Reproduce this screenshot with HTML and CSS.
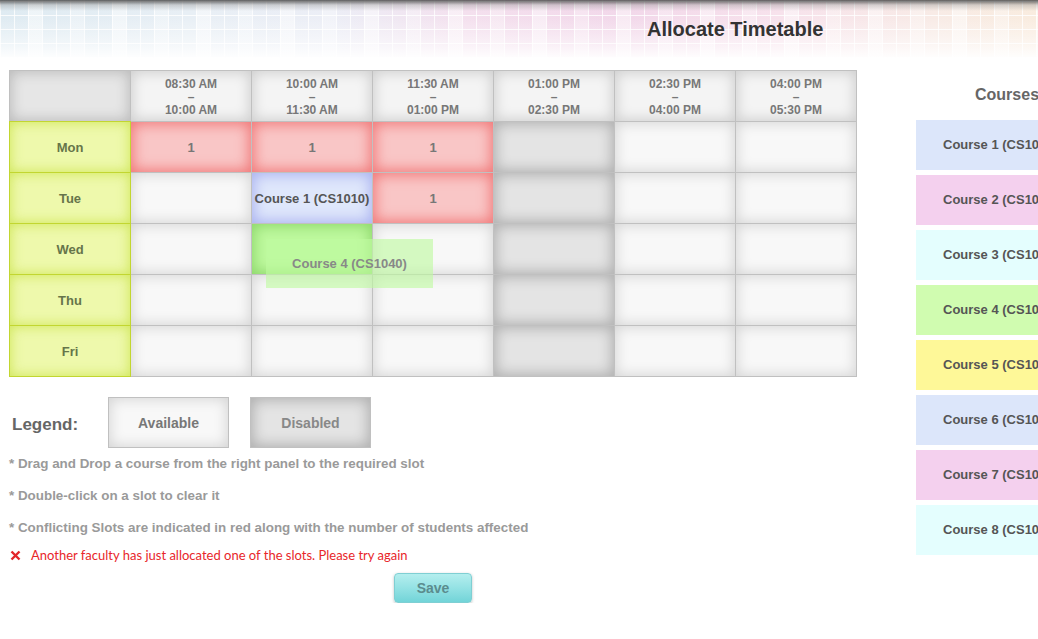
FILE: index.html
```html
<!DOCTYPE html>
<html>
<head>
<meta charset="utf-8">
<title>Allocate Timetable</title>
<link rel="stylesheet" href="styles.css">
</head>
<body>
<header class="banner">
  <h1 class="title">Allocate Timetable</h1>
</header>
<main class="page">
  <section class="left">
    <div class="grid-wrap">
      <div class="grid">
        <div class="cell corner"></div>
        <div class="cell head">08:30 AM<span>–</span>10:00 AM</div>
        <div class="cell head">10:00 AM<span>–</span>11:30 AM</div>
        <div class="cell head">11:30 AM<span>–</span>01:00 PM</div>
        <div class="cell head">01:00 PM<span>–</span>02:30 PM</div>
        <div class="cell head">02:30 PM<span>–</span>04:00 PM</div>
        <div class="cell head">04:00 PM<span>–</span>05:30 PM</div>

        <div class="cell day">Mon</div>
        <div class="cell conflict">1</div>
        <div class="cell conflict">1</div>
        <div class="cell conflict">1</div>
        <div class="cell disabled"></div>
        <div class="cell avail"></div>
        <div class="cell avail"></div>

        <div class="cell day">Tue</div>
        <div class="cell avail"></div>
        <div class="cell c-blue">Course 1 (CS1010)</div>
        <div class="cell conflict">1</div>
        <div class="cell disabled"></div>
        <div class="cell avail"></div>
        <div class="cell avail"></div>

        <div class="cell day">Wed</div>
        <div class="cell avail"></div>
        <div class="cell c-green"></div>
        <div class="cell avail"></div>
        <div class="cell disabled"></div>
        <div class="cell avail"></div>
        <div class="cell avail"></div>

        <div class="cell day">Thu</div>
        <div class="cell avail"></div>
        <div class="cell avail"></div>
        <div class="cell avail"></div>
        <div class="cell disabled"></div>
        <div class="cell avail"></div>
        <div class="cell avail"></div>

        <div class="cell day">Fri</div>
        <div class="cell avail"></div>
        <div class="cell avail"></div>
        <div class="cell avail"></div>
        <div class="cell disabled"></div>
        <div class="cell avail"></div>
        <div class="cell avail"></div>
      </div>
      <div class="ghost">Course 4 (CS1040)</div>
    </div>

    <div class="legend">
      <span class="legend-label">Legend:</span>
      <div class="legend-box avail">Available</div>
      <div class="legend-box disabled">Disabled</div>
    </div>

    <ul class="notes">
      <li>* Drag and Drop a course from the right panel to the required slot</li>
      <li>* Double-click on a slot to clear it</li>
      <li>* Conflicting Slots are indicated in red along with the number of students affected</li>
    </ul>

    <p class="error"><svg class="error-x" width="11" height="11" viewBox="0 0 11 11"><path d="M1.5 1.5 L9.5 9.5 M9.5 1.5 L1.5 9.5" stroke="#e2262a" stroke-width="2.4" stroke-linecap="butt"/></svg>Another faculty has just allocated one of the slots. Please try again</p>

    <div class="actions">
      <button class="save">Save</button>
    </div>
  </section>

  <aside class="courses">
    <h2 class="courses-title">Courses</h2>
    <div class="course blue">Course 1 (CS1010)</div>
    <div class="course pink">Course 2 (CS1020)</div>
    <div class="course cyan">Course 3 (CS1030)</div>
    <div class="course green">Course 4 (CS1040)</div>
    <div class="course yellow">Course 5 (CS1050)</div>
    <div class="course blue">Course 6 (CS1060)</div>
    <div class="course pink">Course 7 (CS1070)</div>
    <div class="course cyan">Course 8 (CS1080)</div>
  </aside>
</main>
</body>
</html>
```

FILE: styles.css
```css
html, body {
  margin: 0;
  padding: 0;
  overflow: hidden;
  background: #fff;
  font-family: "Liberation Sans", Arial, sans-serif;
}

.banner {
  height: 58px;
  display: flex;
  align-items: center;
  padding-left: 647px;
  box-sizing: border-box;
  background:
    linear-gradient(to bottom, rgba(70,70,70,0.85) 0, rgba(140,140,140,0.35) 5px, rgba(255,255,255,0) 11px),
    linear-gradient(to bottom, rgba(255,255,255,0) 18px, rgba(255,255,255,0.55) 44px, rgba(255,255,255,0.95) 58px),
    repeating-linear-gradient(90deg, rgba(255,255,255,0.8) 0 1px, rgba(255,255,255,0) 1px 14px),
    repeating-linear-gradient(0deg, rgba(255,255,255,0.8) 0 1px, rgba(255,255,255,0) 1px 14px),
    repeating-linear-gradient(90deg, rgba(255,255,255,0) 0 28px, rgba(255,255,255,0.45) 28px 42px, rgba(255,255,255,0) 42px 70px, rgba(255,255,255,0.3) 70px 84px),
    linear-gradient(90deg, #dfebf2 0%, #e8eff5 18%, #eceef6 32%, #f4e0ee 45%, #f2d8ea 60%, #f7e2ec 75%, #f8ebe6 90%, #f9ecdf 100%);
}

.title {
  margin: 0;
  font-size: 20px;
  font-weight: bold;
  color: #333;
}

.page {
  display: flex;
  align-items: flex-start;
}

.left {
  width: 847px;
  padding-left: 9px;
  flex: none;
}

.grid-wrap {
  position: relative;
  margin-top: 12px;
}

.grid {
  display: grid;
  grid-template-columns: repeat(7, 120px);
  grid-auto-rows: 50px;
  gap: 1px;
  padding: 1px;
  background: #c0c0c0;
  width: max-content;
}

.cell {
  display: flex;
  align-items: center;
  justify-content: center;
  text-align: center;
  font-size: 13px;
  font-weight: bold;
  color: #777;
}

.corner {
  background: #e6e6e6;
  box-shadow: inset 0 0 14px 1px rgba(0,0,0,0.2);
}

.head {
  flex-direction: column;
  padding-top: 2px;
  box-sizing: border-box;
  font-size: 12px;
  line-height: 13px;
  color: #777;
  background: #f4f4f4;
  box-shadow: inset 0 0 14px 1px rgba(0,0,0,0.17);
}

.head span {
  display: block;
  line-height: 13px;
}

.day {
  background: #eef9ac;
  box-shadow: inset 0 0 12px 1px rgba(205,228,80,0.85);
  outline: 1px solid #c2d630;
  color: #66754a;
}

.avail {
  background: #f8f8f8;
  box-shadow: inset 0 0 14px 1px rgba(0,0,0,0.15);
}

.disabled {
  background: #e4e4e4;
  box-shadow: inset 0 0 14px 2px rgba(0,0,0,0.24);
}

.conflict {
  background: #f9c6c6;
  box-shadow: inset 0 0 14px 2px #f07676;
}

.c-blue {
  background: #dfe7fb;
  box-shadow: inset 0 0 14px 2px #aab2f0;
  color: #555;
}

.c-green {
  background: #bef99e;
  box-shadow: inset 0 0 14px 2px #8cd66a;
}

.ghost {
  position: absolute;
  left: 257px;
  top: 169px;
  width: 167px;
  height: 49px;
  display: flex;
  align-items: center;
  justify-content: center;
  background: rgba(190, 250, 160, 0.62);
  font-size: 13px;
  font-weight: bold;
  color: #888;
}

.legend {
  display: flex;
  align-items: center;
  margin-top: 20px;
}

.legend-label {
  width: 96px;
  padding-left: 3px;
  font-size: 17px;
  font-weight: bold;
  color: #666;
  margin-top: 4px;
}

.legend-box {
  width: 119px;
  height: 49px;
  border: 1px solid #c0c0c0;
  display: flex;
  align-items: center;
  justify-content: center;
  font-size: 14px;
  font-weight: bold;
  color: #777;
  margin-right: 21px;
}

.legend-box.disabled {
  color: #888;
}

.notes {
  list-style: none;
  margin: 0;
  padding: 0;
}

.notes li {
  line-height: 32px;
  font-size: 13.4px;
  font-weight: bold;
  color: #9a9a9a;
}

.error {
  margin: 1px 0 0;
  padding-left: 1px;
  height: 20px;
  line-height: 20px;
  display: flex;
  align-items: center;
  font-family: "Lato", "Open Sans", sans-serif;
  font-size: 13px;
  color: #e8262a;
}

.error-x {
  flex: none;
  margin-left: 0;
  margin-right: 10px;
}

.actions {
  padding-left: 385px;
  margin-top: 8px;
}

.save {
  width: 78px;
  height: 30px;
  border: 1px solid #7fcfd3;
  border-radius: 4px;
  background: linear-gradient(to bottom, #b4eeee 0%, #94e2e4 50%, #72d4d8 100%);
  box-shadow: 0 1px 3px rgba(0,0,0,0.25);
  font-family: "Liberation Sans", Arial, sans-serif;
  font-size: 14px;
  font-weight: bold;
  color: #5b8c8e;
  padding: 0;
}

.courses {
  margin-left: 60px;
  width: 184px;
  flex: none;
  margin-top: 12px;
}

.courses-title {
  margin: 15px 0 0;
  height: 20px;
  line-height: 20px;
  padding-left: 59px;
  font-size: 16px;
  font-weight: bold;
  color: #666;
}

.courses-title + .course {
  margin-top: 15px;
}

.course {
  height: 50px;
  margin-bottom: 5px;
  display: flex;
  align-items: center;
  padding-left: 27px;
  padding-bottom: 2px;
  box-sizing: border-box;
  font-size: 13px;
  font-weight: bold;
  color: #555;
  white-space: nowrap;
}

.course.blue { background: #dce6fa; }
.course.pink { background: #f4d0ee; }
.course.cyan { background: #e4fefe; }
.course.green { background: #d0fcb0; }
.course.yellow { background: #fef898; }
```
